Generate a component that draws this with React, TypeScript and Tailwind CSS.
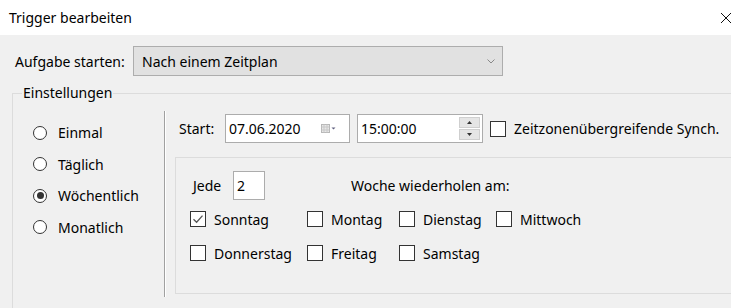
import React from 'react';

const font = { fontFamily: '"Noto Sans", "Open Sans", sans-serif' };

const Radio = ({ label, checked }: { label: string; checked?: boolean }) => (
    <div className="flex items-center h-[31.5px]">
        <span className="shrink-0 w-[14px] h-[14px] rounded-full border border-[#333333] bg-white flex items-center justify-center">
            {checked && <span className="w-[7px] h-[7px] rounded-full bg-[#333333]" />}
        </span>
        <span className="ml-[11px]">{label}</span>
    </div>
);

const Check = ({ label, checked }: { label: string; checked?: boolean }) => (
    <div className="flex items-center h-[20px]">
        <span className="shrink-0 w-[16px] h-[16px] border border-[#333333] bg-white flex items-center justify-center">
            {checked && (
                <svg width="12" height="12" viewBox="0 0 12 12">
                    <path d="M1.5 6.2 L4.6 9.2 L10.5 2.6" fill="none" stroke="#555555" strokeWidth="1.3" />
                </svg>
            )}
        </span>
        <span className="ml-[8px]">{label}</span>
    </div>
);

export default function App() {
    return (
        <div className="w-[731px] h-[308px] overflow-hidden bg-[#f0f0f0] text-[14px] text-black" style={font}>
            {/* Title bar */}
            <div className="h-[35px] bg-white flex items-center justify-between pl-[9px]">
                <span className="text-[14px]">Trigger bearbeiten</span>
                <svg width="12" height="12" viewBox="0 0 12 12" className="mr-[-1px]">
                    <path d="M1 1 L11 11 M11 1 L1 11" stroke="#111111" strokeWidth="1" />
                </svg>
            </div>

            {/* Aufgabe starten */}
            <div className="flex items-center mt-[11px] pl-[15px]">
                <span className="w-[118px]">Aufgabe starten:</span>
                <div className="w-[370px] h-[30px] border border-[#adadad] bg-[#e1e1e1] flex items-center justify-between pl-[8px] pr-[7px]">
                    <span>Nach einem Zeitplan</span>
                    <svg width="8" height="5" viewBox="0 0 8 5">
                        <path d="M0.5 0.5 L4 4 L7.5 0.5" fill="none" stroke="#888888" strokeWidth="1" />
                    </svg>
                </div>
            </div>

            {/* Einstellungen group */}
            <div className="relative ml-[12px] mt-[17px] w-[760px] h-[240px] border border-[#dcdcdc]">
                <span className="absolute left-[9px] top-[-11px] px-[1px] bg-[#f0f0f0] leading-[20px]">Einstellungen</span>
                <div className="flex pt-[17px]">
                    <div className="shrink-0 w-[151px] pl-[20px] pt-[6px]">
                        <Radio label="Einmal" />
                        <Radio label="Täglich" />
                        <Radio label="Wöchentlich" checked />
                        <Radio label="Monatlich" />
                    </div>
                    <div className="shrink-0 w-[1px] h-[186px] bg-[#a0a0a0] border-r border-white box-content" />
                    <div className="pl-[9px]">
                        <div className="flex items-center h-[29px] mt-[3px]">
                            <span className="w-[50px] pl-[4px]">Start:</span>
                            <div className="w-[125px] h-[29px] border border-[#acacac] bg-white flex items-center justify-between pl-[3px] pr-[13px]">
                                <span>07.06.2020</span>
                                <svg width="15" height="9" viewBox="0 0 15 9">
                                    <rect x="0.5" y="0.5" width="8" height="8" fill="#e8e8e8" stroke="#b8b8b8" />
                                    <path d="M0.5 3 H8.5 M0.5 6 H8.5 M3 0.5 V8.5 M6 0.5 V8.5" stroke="#c8c8c8" strokeWidth="1" />
                                    <path d="M10.5 3.5 H14.5 L12.5 5.5 Z" fill="#606080" />
                                </svg>
                            </div>
                            <div className="ml-[7px] w-[126px] h-[29px] border border-[#acacac] bg-white flex items-center justify-between pl-[3px] pr-[2px]">
                                <span>15:00:00</span>
                                <div className="flex flex-col gap-[1px]">
                                    <div className="w-[21px] h-[11px] bg-[#e5e5e5] border border-[#cfcfcf] flex items-center justify-center">
                                        <svg width="5" height="3" viewBox="0 0 5 3"><path d="M0 3 L2.5 0 L5 3 Z" fill="#333333" /></svg>
                                    </div>
                                    <div className="w-[21px] h-[11px] bg-[#e5e5e5] border border-[#cfcfcf] flex items-center justify-center">
                                        <svg width="5" height="3" viewBox="0 0 5 3"><path d="M0 0 L5 0 L2.5 3 Z" fill="#333333" /></svg>
                                    </div>
                                </div>
                            </div>
                            <div className="ml-[7px]">
                                <Check label="Zeitzonenübergreifende Synch." />
                            </div>
                        </div>

                        <div className="mt-[14px] w-[600px] h-[137px] border border-[#dcdcdc] pl-[14px] pt-[13px]">
                            <div className="flex items-center h-[29px]">
                                <span className="w-[43px] pl-[3px]">Jede</span>
                                <div className="w-[32px] h-[29px] border border-[#acacac] bg-white pl-[3px] flex items-center">2</div>
                                <span className="ml-[86px]">Woche wiederholen am:</span>
                            </div>
                            <div className="grid grid-cols-[117px_92px_97px_auto] mt-[9px] gap-y-[14px]">
                                <Check label="Sonntag" checked />
                                <Check label="Montag" />
                                <Check label="Dienstag" />
                                <Check label="Mittwoch" />
                                <Check label="Donnerstag" />
                                <Check label="Freitag" />
                                <Check label="Samstag" />
                            </div>
                        </div>
                    </div>
                </div>
            </div>
        </div>
    );
}
